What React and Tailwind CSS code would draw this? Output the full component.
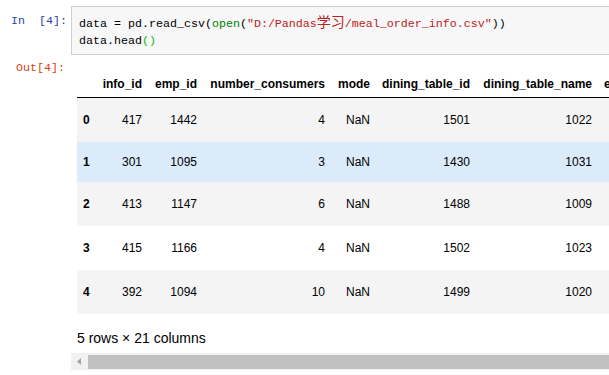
import React from "react";

const mono = { fontFamily: '"Liberation Mono", "Noto Sans CJK SC", monospace' };

const cols = [
  { k: "info_id", cls: "w-[53px]" },
  { k: "emp_id", cls: "w-[55px]" },
  { k: "number_consumers", cls: "w-[128px]" },
  { k: "mode", cls: "w-[45px]" },
  { k: "dining_table_id", cls: "w-[100px]" },
  { k: "dining_table_name", cls: "w-[122px]" },
  { k: "expenditure", cls: "w-[80px]" },
  { k: "dishes_count", cls: "w-[92px]" },
];

const rows = [
  { i: "0", v: ["417", "1442", "4", "NaN", "1501", "1022", "165", "5"], h: "h-[44px]", bg: "bg-[#f4f4f4]" },
  { i: "1", v: ["301", "1095", "3", "NaN", "1430", "1031", "321", "6"], h: "h-[40px]", bg: "bg-[#dbebfa]" },
  { i: "2", v: ["413", "1147", "6", "NaN", "1488", "1009", "854", "15"], h: "h-[44px]", bg: "bg-[#f4f4f4]" },
  { i: "3", v: ["415", "1166", "4", "NaN", "1502", "1023", "466", "10"], h: "h-[44px]", bg: "bg-white" },
  { i: "4", v: ["392", "1094", "10", "NaN", "1499", "1020", "704", "24"], h: "h-[44px]", bg: "bg-[#f4f4f4]" },
];

export default function App() {
  return (
    <div className="w-[609px] h-[375px] overflow-hidden bg-white">
      <div className="w-[1000px]">
        {/* input cell */}
        <div className="flex pt-[6px]">
          <div
            className="w-[71px] shrink-0 text-right pr-[4px] pt-[7px] text-[11.67px] leading-[17px] text-[#303f9f]"
            style={mono}
          >
            In&nbsp;&nbsp;[4]:
          </div>
          <div
            className="flex-1 border border-[#cfcfcf] bg-[#f7f7f7] pl-[7px] pt-[6px] pb-[4px] text-[11.67px] leading-[17px] text-black whitespace-pre"
            style={mono}
          >
            <div>
              data = pd.read_csv(<span className="text-[#008000]">open</span>(
              <span className="text-[#ba2121]">
                "D:/Pandas
                <span
                  className="text-[14px]"
                  style={{ fontFamily: '"Noto Sans CJK SC", sans-serif' }}
                >
                  学习
                </span>
                /meal_order_info.csv"
              </span>
              ))
            </div>
            <div>
              data.head<span className="text-[#00bb00]">()</span>
            </div>
          </div>
        </div>

        {/* output */}
        <div className="flex mt-[5px]">
          <div
            className="w-[71px] shrink-0 text-right pr-[6px] text-[11.67px] leading-[17px] text-[#d84315]"
            style={mono}
          >
            Out[4]:
          </div>
          <div className="flex-1" style={{ fontFamily: '"Liberation Sans", Arial, sans-serif' }}>
            <div className="pl-[6px] pt-[10px] text-[12px] text-black">
              <div className="flex h-[28px] items-center border-b border-black font-bold">
                <div className="w-[18px] shrink-0" />
                {cols.map((c) => (
                  <div key={c.k} className={`${c.cls} shrink-0 px-[6px] text-right`}>
                    {c.k}
                  </div>
                ))}
              </div>
              {rows.map((r) => (
                <div key={r.i} className={`flex items-center ${r.h} ${r.bg}`}>
                  <div className="w-[18px] shrink-0 px-[6px] text-right font-bold">{r.i}</div>
                  {cols.map((c, j) => (
                    <div key={c.k} className={`${c.cls} shrink-0 px-[6px] text-right`}>
                      {r.v[j]}
                    </div>
                  ))}
                </div>
              ))}
              <div className="mt-[16px] text-[14px] leading-[16px]">5 rows × 21 columns</div>
            </div>
            <div className="mt-[7px] h-[17px] bg-[#f1f1f1] flex items-center">
              <div className="w-[17px] flex items-center justify-center">
                <svg width="5" height="7" viewBox="0 0 5 7">
                  <polygon points="4,0 4,7 0,3.5" fill="#a3a3a3" />
                </svg>
              </div>
              <div className="flex-1 h-[14px] bg-[#c1c1c1]" />
            </div>
          </div>
        </div>
      </div>
    </div>
  );
}
